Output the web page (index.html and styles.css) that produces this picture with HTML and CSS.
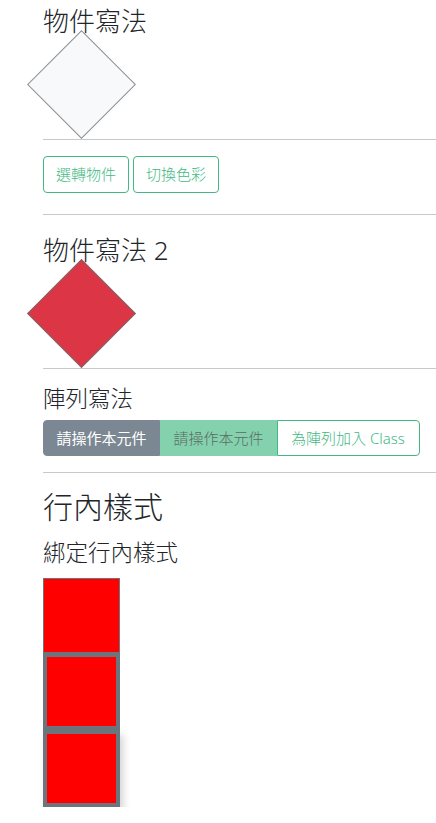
FILE: index.html
```html
<!DOCTYPE html>
<html lang="zh-Hant">
<head>
<meta charset="utf-8">
<title>物件寫法</title>
<link rel="stylesheet" href="styles.css">
</head>
<body>
<div class="page">
  <section class="sec">
    <h2 class="title first">物件寫法</h2>
    <div class="diamond light"></div>
  </section>
  <hr class="rule">
  <div class="actions">
    <button class="btn btn-outline">選轉物件</button>
    <button class="btn btn-outline">切換色彩</button>
  </div>
  <hr class="rule">
  <section class="sec">
    <h2 class="title">物件寫法 2</h2>
    <div class="diamond danger"></div>
  </section>
  <hr class="rule">
  <section class="sec">
    <h3 class="subtitle">陣列寫法</h3>
    <div class="btn-group">
      <button class="btn g-first btn-gray">請操作本元件</button>
      <button class="btn g-mid btn-mint">請操作本元件</button>
      <button class="btn g-last btn-outline">為陣列加入 Class</button>
    </div>
  </section>
  <hr class="rule">
  <section class="sec">
    <h1 class="big">行內樣式</h1>
    <h3 class="subtitle bind">綁定行內樣式</h3>
    <div class="boxes">
      <div class="box thin"></div>
      <div class="box thick"></div>
      <div class="box thick shadow"></div>
    </div>
  </section>
</div>
</body>
</html>
```

FILE: styles.css
```css
html, body {
  margin: 0;
  padding: 0;
  background: #fff;
}
body {
  font-family: "Noto Sans", "Noto Sans CJK TC", sans-serif;
  color: #212529;
  overflow: hidden;
}
.page {
  padding: 2px 0 0 43px;
}
.title {
  font-size: 26px;
  font-weight: 300;
  line-height: 39px;
  margin: 0 0 5px;
}
.subtitle {
  font-size: 22.5px;
  font-weight: 300;
  line-height: 27px;
  margin: 0 0 8px;
}
.big {
  font-size: 30px;
  font-weight: 300;
  line-height: 36px;
  margin: 0 0 14px;
}
.subtitle.bind {
  margin-bottom: 12px;
}
.diamond {
  width: 77px;
  height: 77px;
  box-sizing: border-box;
  border: 1px solid #8a8d91;
  transform: rotate(45deg);
}
.diamond.light { background: #f8f9fa; }
.diamond.danger { background: #dc3545; border-color: #7a6a6c; }
.rule {
  border: 0;
  border-top: 1px solid #c9c9ca;
  margin: 16px 0;
  height: 0;
}
.actions {
  display: flex;
  gap: 4px;
  padding-bottom: 5px;
}
.btn {
  font-family: inherit;
  font-size: 15px;
  font-weight: 300;
  line-height: 22.5px;
  padding: 6px 12px;
  border: 1px solid transparent;
  border-radius: 4px;
  background: transparent;
  cursor: pointer;
}
.btn-outline {
  color: #42b983;
  border-color: #42b983;
  background: #fff;
}
.btn-group {
  display: flex;
}
.btn-group .btn { border-radius: 0; padding: 6px 12.5px; }
.btn-group .g-first { border-radius: 4px 0 0 4px; }
.btn-group .g-last { border-radius: 0 4px 4px 0; padding-left: 13px; padding-right: 14px; }
.btn-gray {
  background: #7b8793;
  border-color: #7b8793;
  color: #fff;
  font-weight: 400;
}
.btn-mint {
  background: #84d1ae;
  border-color: #84d1ae;
  color: #5c6b64;
}
.boxes {
  display: flex;
  flex-direction: column;
}
.box {
  width: 77px;
  height: 77px;
  box-sizing: border-box;
  background: #ff0000;
  border: solid #6c757d;
}
.box.thin { border-width: 1px; height: 75px; }
.box.thick { border-width: 4px; }
.box.shadow { box-shadow: 3px 5px 8px rgba(0, 0, 0, 0.18); }
```
